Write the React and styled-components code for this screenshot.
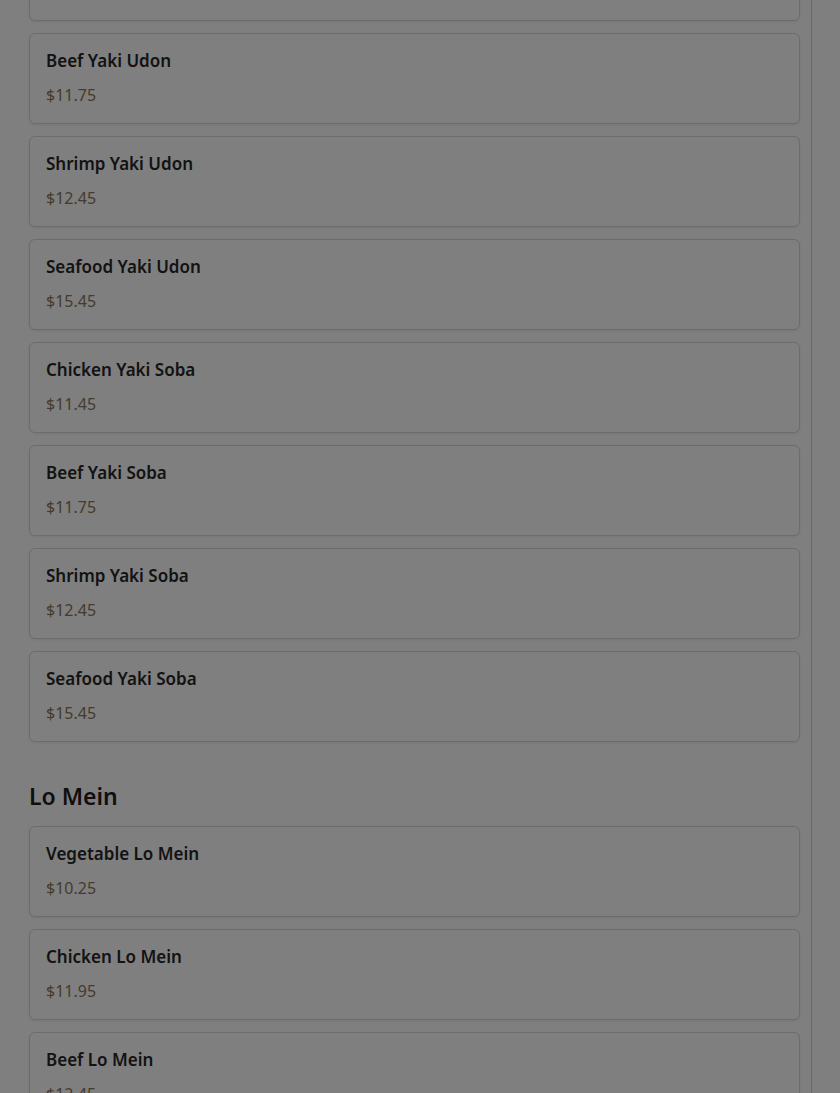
import React from "react";
import styled, { createGlobalStyle } from "styled-components";

const GlobalStyle = createGlobalStyle`
  html, body {
    margin: 0;
    padding: 0;
    background: #ffffff;
    overflow: hidden;
  }
  body {
    font-family: "Noto Sans", "Open Sans", sans-serif;
    color: #2a2a2a;
  }
`;

const Page = styled.div`
  display: flex;
  height: 1093px;
  overflow: hidden;
`;

const Menu = styled.main`
  width: 812px;
  box-sizing: border-box;
  padding: 0 11px 0 29px;
  border-right: 1px solid #cfcfcf;
  margin-top: -70px;
`;

const Section = styled.section`
  & + & {
    margin-top: 38px;
  }
`;

const SectionTitle = styled.h2`
  margin: 0 0 14px;
  font-size: 23px;
  line-height: 32px;
  font-weight: 600;
  color: #1f1f1f;
`;

const Card = styled.div`
  box-sizing: border-box;
  height: 91px;
  padding: 16px 16px;
  margin-bottom: 12px;
  border: 1px solid #d9d9d9;
  border-radius: 6px;
  background: #ffffff;
  box-shadow: 0 1px 3px rgba(0, 0, 0, 0.08);
`;

const ItemName = styled.h3`
  margin: 0;
  font-size: 17px;
  line-height: 22px;
  font-weight: 600;
  color: #262626;
`;

const Price = styled.p`
  margin: 12px 0 0;
  font-size: 16px;
  line-height: 22px;
  color: #8c7656;
`;

const Overlay = styled.div`
  position: fixed;
  inset: 0;
  background: rgba(0, 0, 0, 0.5);
`;

const sections = [
  {
    title: null,
    items: [
      { name: "Chicken Yaki Udon", price: "$11.45" },
      { name: "Beef Yaki Udon", price: "$11.75" },
      { name: "Shrimp Yaki Udon", price: "$12.45" },
      { name: "Seafood Yaki Udon", price: "$15.45" },
      { name: "Chicken Yaki Soba", price: "$11.45" },
      { name: "Beef Yaki Soba", price: "$11.75" },
      { name: "Shrimp Yaki Soba", price: "$12.45" },
      { name: "Seafood Yaki Soba", price: "$15.45" },
    ],
  },
  {
    title: "Lo Mein",
    items: [
      { name: "Vegetable Lo Mein", price: "$10.25" },
      { name: "Chicken Lo Mein", price: "$11.95" },
      { name: "Beef Lo Mein", price: "$12.45" },
      { name: "Shrimp Lo Mein", price: "$12.95" },
    ],
  },
];

function App() {
  return (
    <>
      <GlobalStyle />
      <Page>
        <Menu>
          {sections.map((section, i) => (
            <Section key={i}>
              {section.title && <SectionTitle>{section.title}</SectionTitle>}
              {section.items.map((item) => (
                <Card key={item.name}>
                  <ItemName>{item.name}</ItemName>
                  <Price>{item.price}</Price>
                </Card>
              ))}
            </Section>
          ))}
        </Menu>
      </Page>
      <Overlay />
    </>
  );
}

export default App;
